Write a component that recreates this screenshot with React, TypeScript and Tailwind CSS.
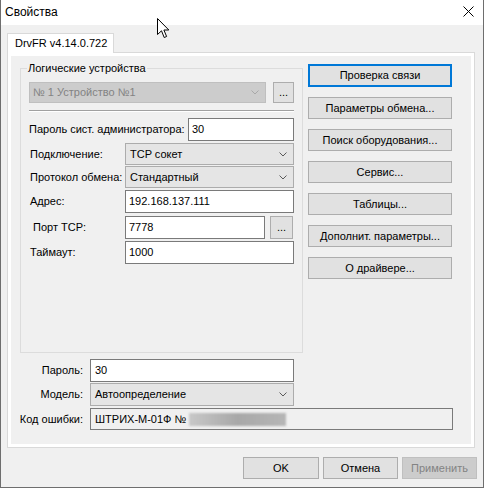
import clsx from "clsx";
import type { ReactNode } from "react";

const FONT = "font-['Liberation_Sans',Arial,sans-serif]";

/** Small combobox arrow, as Windows 10 draws it. */
function Chevron({ color }: { color: string }) {
  return (
    <svg width="8" height="5" viewBox="0 0 8 5" className="shrink-0">
      <polyline points="0.5,0.5 4,4 7.5,0.5" fill="none" stroke={color} strokeWidth="1" />
    </svg>
  );
}

function Combo({ value, className, disabled }: { value: string; className?: string; disabled?: boolean }) {
  return (
    <div
      className={clsx(
        "flex items-center justify-between border pr-[6px]",
        disabled
          ? "border-[#bfbfbf] bg-[#cccccc] pl-[3px] text-[#838383]"
          : "border-[#acacac] bg-[#e5e5e5] pl-[4px] text-black",
        className
      )}
    >
      <span className="whitespace-nowrap">{value}</span>
      <Chevron color={disabled ? "#a8a8a8" : "#5a5a5a"} />
    </div>
  );
}

function Edit({ value, className }: { value: string; className?: string }) {
  return (
    <div className={clsx("flex items-center border border-[#7a7a7a] bg-white pl-[3px]", className)}>
      <span className="whitespace-nowrap">{value}</span>
    </div>
  );
}

function Btn({
  children,
  className,
  primary,
  disabled,
}: {
  children: ReactNode;
  className?: string;
  primary?: boolean;
  disabled?: boolean;
}) {
  return (
    <div
      className={clsx(
        "flex items-center justify-center whitespace-nowrap",
        primary
          ? "border-2 border-[#0078d7] bg-[#e1e1e1]"
          : disabled
            ? "border border-[#bfbfbf] bg-[#cccccc] text-[#838383]"
            : "border border-[#adadad] bg-[#e1e1e1]",
        className
      )}
    >
      {children}
    </div>
  );
}

const SIDE_BUTTONS = [
  "Параметры обмена...",
  "Поиск оборудования...",
  "Сервис...",
  "Таблицы...",
  "Дополнит. параметры...",
  "О драйвере...",
];

export default function App() {
  return (
    <div
      className={`${FONT} relative flex h-[488px] w-[484px] flex-col border-x border-b border-[#6e6e6e] bg-[#f0f0f0] text-[11px] leading-[13px] text-black`}
    >
      {/* Title bar */}
      <div className="flex h-[25px] shrink-0 items-center justify-between bg-white pl-[4px] pr-[9px]">
        <span className="text-[12px]">Свойства</span>
        <svg width="11" height="11" viewBox="0 0 11 11" className="-mt-[2px]">
          <path d="M0.5 0.5 L10.5 10.5 M10.5 0.5 L0.5 10.5" stroke="#000" strokeWidth="1" />
        </svg>
      </div>

      {/* Tab */}
      <div className="mt-[8px] flex pl-[6px]">
        <div className="relative z-10 -mb-px flex h-[20px] w-[107px] items-center border-x border-t border-[#d9d9d9] bg-white pl-[7px]">
          DrvFR v4.14.0.722
        </div>
      </div>

      {/* Tab page */}
      <div className="ml-[6px] h-[396px] w-[468px] border border-[#d9d9d9] bg-white p-[3px]">
        <div className="flex h-full flex-col bg-[#f0f0f0]">
          <div className="flex items-start gap-[5px] pl-[9px]">
            {/* Logical devices group */}
            <div className="relative mt-[12px] h-[285px] w-[283px] border border-[#dcdcdc] px-[8px] pt-[13px]">
              <span className="absolute -top-[7px] left-[6px] bg-[#f0f0f0] px-px">Логические устройства</span>

              <div className="flex h-[21px] gap-[7px]">
                <Combo value="№ 1 Устройство №1" disabled className="w-[237px]" />
                <Btn className="w-[21px]">...</Btn>
              </div>

              <div className="mt-[7px] h-[2px] border-t border-b border-t-[#a0a0a0] border-b-white" />

              <div className="mt-[6px] flex h-[23px] items-center">
                <span className="w-[159px]">Пароль сист. администратора:</span>
                <Edit value="30" className="h-full w-[106px]" />
              </div>

              <div className="mt-[2px] flex h-[22px] items-center">
                <span className="w-[96px] pl-px">Подключение:</span>
                <Combo value="TCP сокет" className="h-full w-[169px]" />
              </div>

              <div className="mt-px flex h-[22px] items-center">
                <span className="w-[96px] pl-px">Протокол обмена:</span>
                <Combo value="Стандартный" className="h-full w-[169px]" />
              </div>

              <div className="mt-[2px] flex h-[23px] items-center">
                <span className="w-[96px] pl-px">Адрес:</span>
                <Edit value="192.168.137.111" className="h-full w-[169px]" />
              </div>

              <div className="mt-[3px] flex h-[23px] items-center">
                <span className="w-[96px] pl-[4px]">Порт TCP:</span>
                <Edit value="7778" className="h-full w-[140px]" />
                <Btn className="ml-[5px] h-full w-[23px]">...</Btn>
              </div>

              <div className="mt-[2px] flex h-[23px] items-center">
                <span className="w-[96px] pl-px">Таймаут:</span>
                <Edit value="1000" className="h-full w-[169px]" />
              </div>
            </div>

            {/* Side buttons */}
            <div className="mt-[8px] flex w-[144px] flex-col gap-[10px]">
              <Btn primary className="h-[23px]">
                Проверка связи
              </Btn>
              {SIDE_BUTTONS.map((label) => (
                <Btn key={label} className="h-[22px]">
                  {label}
                </Btn>
              ))}
            </div>
          </div>

          {/* Password / model / error code */}
          <div className="mt-[6px] flex h-[23px] items-center">
            <span className="w-[72px] text-right">Пароль:</span>
            <Edit value="30" className="ml-[7px] h-full w-[204px] pl-[4px]" />
          </div>
          <div className="mt-[1px] flex h-[23px] items-center">
            <span className="w-[72px] text-right">Модель:</span>
            <Combo value="Автоопределение" className="ml-[7px] h-full w-[204px]" />
          </div>
          <div className="mt-[2px] flex h-[22px] items-center">
            <span className="w-[72px] text-right">Код ошибки:</span>
            <div className="ml-[7px] flex h-full w-[363px] items-center border border-[#7a7a7a] bg-[#f0f0f0] pl-[4px]">
              <span className="whitespace-nowrap">ШТРИХ-М-01Ф №</span>
              <div className="ml-[3px] h-[13px] w-[97px] bg-linear-to-r from-[#c8c8c8] via-[#a8a8a8] to-[#b6b6b6] blur-[1px]" />
            </div>
          </div>
        </div>
      </div>

      {/* Dialog buttons */}
      <div className="mt-[9px] flex justify-end gap-[4px] pr-[6px]">
        <Btn className="h-[22px] w-[76px]">OK</Btn>
        <Btn className="h-[22px] w-[75px]">Отмена</Btn>
        <Btn disabled className="h-[22px] w-[75px]">
          Применить
        </Btn>
      </div>

      {/* Mouse pointer */}
      <svg width="13" height="21" viewBox="0 0 13 21" className="absolute left-[156px] top-[18px]">
        <path
          d="M0.5 0.5 L0.5 16.5 L4.5 12.8 L7.2 19.5 L9.6 18.5 L6.9 12 L11.8 12 Z"
          fill="#fff"
          stroke="#000"
          strokeWidth="1"
          strokeLinejoin="miter"
        />
      </svg>
    </div>
  );
}
